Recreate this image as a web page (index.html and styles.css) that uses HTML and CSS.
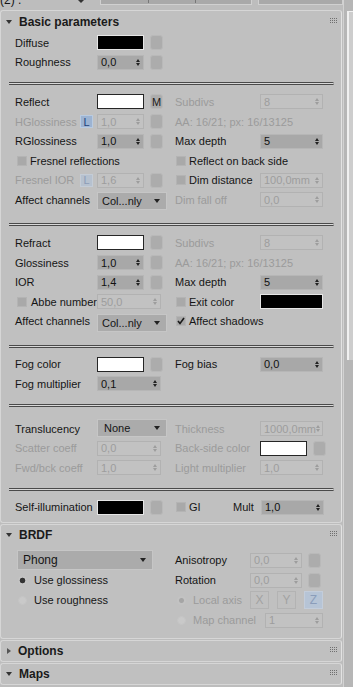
FILE: index.html
```html
<!DOCTYPE html>
<html lang="en">
<head>
  <meta charset="UTF-8">
  <meta name="viewport" content="width=device-width, initial-scale=1.0">
  <title>Material parameters</title>
  <link rel="stylesheet" href="styles.css">
</head>
<body>

  <div class="main">
    <!-- material name strip (cut off at the top) -->
    <div class="topbar">
      <span class="mtl-name">(2) .</span>
      <span class="pick"></span>
      <div class="top-field wide"><i></i><i></i></div>
      <div class="top-field"></div>
    </div>

    <!-- Basic parameters -->
    <div class="rollout">
      <div class="roll-head">
        <span class="tri"></span><span class="roll-title">Basic parameters</span>
        <svg class="grip" width="8" height="6" viewBox="0 0 8 6"><path d="M0 0h1v1H0zM2 0h1v1H2zM4 0h1v1H4zM6 0h1v1H6zM0 2h1v1H0zM2 2h1v1H2zM4 2h1v1H4zM6 2h1v1H6zM0 4h1v1H0zM2 4h1v1H2zM4 4h1v1H4zM6 4h1v1H6z" fill="#6f6f6f"/></svg>
      </div>

      <div class="sect first">
        <div class="row">
          <div class="half"><span class="lbl">Diffuse</span><span class="swatch dark"></span><span class="mapbtn"></span></div>
          <div class="half r"></div>
        </div>
        <div class="row">
          <div class="half"><span class="lbl">Roughness</span><span class="spin"><span>0,0</span><i class="arr"></i></span><span class="mapbtn"></span></div>
          <div class="half r"></div>
        </div>
      </div>
      <div class="sep"></div>

      <div class="sect">
        <div class="row">
          <div class="half"><span class="lbl">Reflect</span><span class="swatch light"></span><span class="mapbtn m">M</span></div>
          <div class="half r"><span class="lbl off">Subdivs</span><span class="spin wr off"><span>8</span><i class="arr"></i></span></div>
        </div>
        <div class="row">
          <div class="half"><span class="lbl"><span class="off">HGlossiness</span><span class="lock">L</span></span><span class="spin off"><span>1,0</span><i class="arr"></i></span><span class="mapbtn"></span></div>
          <div class="half r"><span class="off">AA: 16/21; px: 16/13125</span></div>
        </div>
        <div class="row">
          <div class="half"><span class="lbl">RGlossiness</span><span class="spin"><span>1,0</span><i class="arr"></i></span><span class="mapbtn"></span></div>
          <div class="half r"><span class="lbl">Max depth</span><span class="spin wr"><span>5</span><i class="arr"></i></span></div>
        </div>
        <div class="row">
          <div class="half"><span class="chk"></span><span>Fresnel reflections</span></div>
          <div class="half r"><span class="chk"></span><span>Reflect on back side</span></div>
        </div>
        <div class="row">
          <div class="half"><span class="lbl"><span class="off">Fresnel IOR</span><span class="lock off">L</span></span><span class="spin off"><span>1,6</span><i class="arr"></i></span><span class="mapbtn"></span></div>
          <div class="half r"><span class="lbl"><span class="chk"></span><span>Dim distance</span></span><span class="spin wr off"><span>100,0mm</span><i class="arr"></i></span></div>
        </div>
        <div class="row tall">
          <div class="half"><span class="lbl">Affect channels</span><span class="drop"><span>Col...nly</span><i class="down"></i></span></div>
          <div class="half r"><span class="lbl off">Dim fall off</span><span class="spin wr off"><span>0,0</span><i class="arr"></i></span></div>
        </div>
      </div>
      <div class="sep"></div>

      <div class="sect">
        <div class="row">
          <div class="half"><span class="lbl">Refract</span><span class="swatch light"></span><span class="mapbtn"></span></div>
          <div class="half r"><span class="lbl off">Subdivs</span><span class="spin wr off"><span>8</span><i class="arr"></i></span></div>
        </div>
        <div class="row">
          <div class="half"><span class="lbl">Glossiness</span><span class="spin"><span>1,0</span><i class="arr"></i></span><span class="mapbtn"></span></div>
          <div class="half r"><span class="off">AA: 16/21; px: 16/13125</span></div>
        </div>
        <div class="row">
          <div class="half"><span class="lbl">IOR</span><span class="spin"><span>1,4</span><i class="arr"></i></span><span class="mapbtn"></span></div>
          <div class="half r"><span class="lbl">Max depth</span><span class="spin wr"><span>5</span><i class="arr"></i></span></div>
        </div>
        <div class="row">
          <div class="half"><span class="lbl"><span class="chk"></span><span>Abbe number</span></span><span class="spin wide off"><span>50,0</span><i class="arr"></i></span></div>
          <div class="half r"><span class="lbl"><span class="chk"></span><span>Exit color</span></span><span class="swatch dark wr"></span></div>
        </div>
        <div class="row tall">
          <div class="half"><span class="lbl">Affect channels</span><span class="drop"><span>Col...nly</span><i class="down"></i></span></div>
          <div class="half r"><span class="chk on"><svg width="8" height="8" viewBox="0 0 8 8"><path d="M1 4l2 2.5L7 1" fill="none" stroke="#1a1a1a" stroke-width="1.6"/></svg></span><span>Affect shadows</span></div>
        </div>
      </div>
      <div class="sep"></div>

      <div class="sect">
        <div class="row">
          <div class="half"><span class="lbl">Fog color</span><span class="swatch light"></span><span class="mapbtn"></span></div>
          <div class="half r"><span class="lbl">Fog bias</span><span class="spin wr"><span>0,0</span><i class="arr"></i></span></div>
        </div>
        <div class="row">
          <div class="half"><span class="lbl">Fog multiplier</span><span class="spin wide"><span>0,1</span><i class="arr"></i></span></div>
          <div class="half r"></div>
        </div>
      </div>
      <div class="sep"></div>

      <div class="sect trans">
        <div class="row">
          <div class="half"><span class="lbl">Translucency</span><span class="drop short"><span>None</span><i class="down"></i></span></div>
          <div class="half r"><span class="lbl off">Thickness</span><span class="spin wr off"><span>1000,0mm</span><i class="arr"></i></span></div>
        </div>
        <div class="row">
          <div class="half"><span class="lbl off">Scatter coeff</span><span class="spin wide off"><span>0,0</span><i class="arr"></i></span></div>
          <div class="half r"><span class="lbl off">Back-side color</span><span class="swatch light"></span><span class="mapbtn"></span></div>
        </div>
        <div class="row">
          <div class="half"><span class="lbl off">Fwd/bck coeff</span><span class="spin wide off"><span>1,0</span><i class="arr"></i></span></div>
          <div class="half r"><span class="lbl off">Light multiplier</span><span class="spin wr off"><span>1,0</span><i class="arr"></i></span></div>
        </div>
      </div>
      <div class="sep"></div>

      <div class="sect last">
        <div class="row">
          <div class="half"><span class="lbl">Self-illumination</span><span class="swatch dark"></span><span class="mapbtn"></span></div>
          <div class="half r"><span class="chk"></span><span class="gi">GI</span><span class="mult">Mult</span><span class="spin wr"><span>1,0</span><i class="arr"></i></span></div>
        </div>
      </div>
    </div>

    <!-- BRDF -->
    <div class="rollout">
      <div class="roll-head small">
        <span class="tri"></span><span class="roll-title">BRDF</span>
        <svg class="grip" width="8" height="6" viewBox="0 0 8 6"><path d="M0 0h1v1H0zM2 0h1v1H2zM4 0h1v1H4zM6 0h1v1H6zM0 2h1v1H0zM2 2h1v1H2zM4 2h1v1H4zM6 2h1v1H6zM0 4h1v1H0zM2 4h1v1H2zM4 4h1v1H4zM6 4h1v1H6z" fill="#6f6f6f"/></svg>
      </div>
      <div class="brdf">
        <div class="row b">
          <div class="half"><span class="drop phong"><span>Phong</span><i class="down"></i></span></div>
          <div class="half r"><span class="lbl s">Anisotropy</span><span class="spin an off"><span>0,0</span><i class="arr"></i></span><span class="mapbtn"></span></div>
        </div>
        <div class="row b">
          <div class="half"><span class="radio on"></span><span>Use glossiness</span></div>
          <div class="half r"><span class="lbl s">Rotation</span><span class="spin an off"><span>0,0</span><i class="arr"></i></span><span class="mapbtn"></span></div>
        </div>
        <div class="row b">
          <div class="half"><span class="radio"></span><span>Use roughness</span></div>
          <div class="half r"><span class="lbl s"><span class="radio on off"></span><span class="off">Local axis</span></span><span class="axis">X</span><span class="axis">Y</span><span class="axis sel">Z</span></div>
        </div>
        <div class="row b">
          <div class="half"></div>
          <div class="half r"><span class="lbl mc"><span class="radio off"></span><span class="off">Map channel</span></span><span class="spin ch off"><span>1</span><i class="arr"></i></span></div>
        </div>
      </div>
    </div>

    <!-- Options -->
    <div class="rollout">
      <div class="roll-head small">
        <span class="tri closed"></span><span class="roll-title">Options</span>
        <svg class="grip" width="8" height="6" viewBox="0 0 8 6"><path d="M0 0h1v1H0zM2 0h1v1H2zM4 0h1v1H4zM6 0h1v1H6zM0 2h1v1H0zM2 2h1v1H2zM4 2h1v1H4zM6 2h1v1H6zM0 4h1v1H0zM2 4h1v1H2zM4 4h1v1H4zM6 4h1v1H6z" fill="#6f6f6f"/></svg>
      </div>
    </div>

    <!-- Maps -->
    <div class="rollout">
      <div class="roll-head small">
        <span class="tri"></span><span class="roll-title">Maps</span>
        <svg class="grip" width="8" height="6" viewBox="0 0 8 6"><path d="M0 0h1v1H0zM2 0h1v1H2zM4 0h1v1H4zM6 0h1v1H6zM0 2h1v1H0zM2 2h1v1H2zM4 2h1v1H4zM6 2h1v1H6zM0 4h1v1H0zM2 4h1v1H2zM4 4h1v1H4zM6 4h1v1H6z" fill="#6f6f6f"/></svg>
      </div>
    </div>
  </div>

  <div class="scroll">
    <div class="thumb"></div>
  </div>

</body>
</html>
```

FILE: styles.css
```css
* {
  box-sizing: border-box;
}
body {
  margin: 0;
  height: 687px;
  display: flex;
  overflow: hidden;
  background-color: #bdbdbd;
  font-family: "Liberation Sans", Arial, sans-serif;
  font-size: 11px;
  color: #151515;
}
.main {
  width: 343px;
  flex: none;
}

/* top strip */
.topbar {
  height: 10px;
  display: flex;
  align-items: flex-start;
  overflow: hidden;
}
.mtl-name {
  margin-top: -7px;
  line-height: 14px;
  width: 78px;
  font-size: 12px;
}
.pick {
  width: 6px;
  height: 3px;
  border-left: 3px solid transparent;
  border-right: 3px solid transparent;
  border-top: 3px solid #333;
}
.top-field {
  position: relative;
  height: 5px;
  width: 85px;
  margin-left: auto;
  background: #a9a9a9;
  border: 1px solid #d0d0d0;
  border-top: none;
}
.top-field.wide {
  width: 152px;
  margin-left: 16px;
  margin-right: 3px;
}
.top-field i {
  width: 1px;
  height: 3px;
  background: #777;
  position: absolute;
  top: 0;
  left: 47px;
}
.top-field i + i {
  left: 94px;
}

/* rollouts */
.rollout {
  width: 342px;
  background: #c0c0c0;
  border: 1px solid #d6d6d6;
  border-right-color: #e2e2e2;
  border-radius: 3px;
  margin-bottom: 1px;
}
.roll-head {
  height: 21px;
  display: flex;
  align-items: center;
}
.roll-head.small {
  height: 20px;
}
.tri {
  width: 0;
  height: 0;
  margin: 0 7px 0 5px;
  border-left: 3px solid transparent;
  border-right: 3px solid transparent;
  border-top: 4px solid #333;
}
.tri.closed {
  margin: 0 7px 0 6px;
  border-top: 3px solid transparent;
  border-bottom: 3px solid transparent;
  border-left: 4px solid #555;
  border-right: none;
}
.roll-title {
  font-weight: bold;
  font-size: 12px;
  color: #1a1a1a;
}
.grip {
  margin-left: auto;
  margin-right: 3px;
  margin-top: -2px;
}

/* sections */
.sect {
  padding-left: 14px;
}
.sect.first {
  padding-top: 1px;
}
.sect.trans {
  padding-top: 5px;
}
.sect.last {
  padding-bottom: 5px;
}
.sep {
  margin: 10px 0 7px 8px;
  width: 325px;
  height: 3px;
  background: #d8d8d8;
  border-top: 1px solid #4a4a4a;
  border-bottom: 1px solid #4a4a4a;
  border-radius: 0 2px 2px 0;
}
.row {
  display: grid;
  grid-template-columns: 155px 155px;
  column-gap: 5px;
  height: 19.6px;
  align-items: center;
}
.row.tall {
  height: 23px;
  align-items: start;
}
.row.tall .half {
  height: 19.6px;
}
.half {
  display: flex;
  align-items: center;
  white-space: nowrap;
}
.lbl {
  width: 82px;
  flex: none;
  display: flex;
  align-items: center;
  justify-content: space-between;
}
.half.r .lbl {
  width: 85px;
  justify-content: flex-start;
}
.off {
  color: #9b9b9b;
}
.lock {
  width: 13px;
  height: 13px;
  margin-right: 4px;
  display: flex;
  align-items: center;
  justify-content: center;
  background: #9cb3d2;
  border: 1px solid #b9cbe1;
  color: #23427a;
  font-size: 11px;
}
.lock.off {
  background: #b6c1cf;
  border-color: #c4ccd6;
  color: #8c9cb6;
}

/* controls */
.swatch {
  width: 47px;
  height: 15px;
  flex: none;
}
.swatch.light {
  background: #fff;
  border: 1px solid #262626;
}
.swatch.dark {
  background: #000;
  border: 1px solid #e6e6e6;
}
.swatch.wr {
  width: 63px;
}
.mapbtn {
  width: 13px;
  height: 15px;
  margin-left: 6px;
  flex: none;
  background: #acacac;
  border: 1px solid #b9b9b9;
  border-radius: 3px;
}
.mapbtn.m {
  display: flex;
  align-items: center;
  justify-content: center;
  font-size: 11px;
  color: #1a1a1a;
}
.spin {
  width: 47px;
  height: 15px;
  flex: none;
  display: flex;
  align-items: center;
  justify-content: space-between;
  padding: 0 3px;
  background: #a8a8a8;
  border: 1px solid #b6b6b6;
  font-size: 11px;
  color: #111;
}
.spin.wide {
  width: 64px;
}
.spin.wr {
  width: 63px;
}
.spin.an {
  width: 52px;
}
.spin.ch {
  width: 58px;
}
.spin.off {
  background: #c2c2c2;
  border-color: #b2b2b2;
  color: #9d9d9d;
}
.arr {
  display: flex;
  flex-direction: column;
  gap: 1px;
}
.arr::before, .arr::after {
  content: "";
  border-left: 2px solid transparent;
  border-right: 2px solid transparent;
}
.arr::before {
  border-bottom: 3px solid #222;
}
.arr::after {
  border-top: 3px solid #222;
}
.spin.off .arr::before {
  border-bottom-color: #9d9d9d;
}
.spin.off .arr::after {
  border-top-color: #9d9d9d;
}
.drop {
  width: 70px;
  height: 18px;
  margin-top: 3px;
  flex: none;
  display: flex;
  align-items: center;
  justify-content: space-between;
  padding: 0 6px 0 4px;
  background: #ababab;
  border: 1px solid #c6c6c6;
}
.drop.short {
  margin-top: -2px;
  padding-left: 6px;
}
.drop.phong {
  width: 136px;
  height: 20px;
  margin: 0 0 0 2px;
  padding-left: 5px;
  font-size: 12px;
}
.down {
  border-left: 3px solid transparent;
  border-right: 3px solid transparent;
  border-top: 4px solid #222;
}
.chk {
  width: 10px;
  height: 10px;
  margin: 0 3px 0 2px;
  flex: none;
  display: flex;
  align-items: center;
  justify-content: center;
  background: #a9a9a9;
  border: 1px solid #b4b4b4;
}
.half.r .chk {
  margin-left: 1px;
}
.gi {
  width: 44px;
}
.mult {
  width: 28px;
}

/* BRDF */
.brdf {
  padding: 5px 0 8px 14px;
}
.row.b {
  height: 20px;
}
.half.r .lbl.s {
  width: 75px;
}
.half.r .lbl.mc {
  width: 90px;
}
.radio {
  width: 9px;
  height: 9px;
  margin: 0 7px 0 3px;
  flex: none;
  border-radius: 50%;
  background: #c9c9c9;
  border: 1px solid #c4c4c4;
}
.radio.on {
  background: radial-gradient(circle, #333 2.5px, #c9c9c9 3.2px);
}
.radio.on.off {
  background: radial-gradient(circle, #a5a5a5 2px, #c2c2c2 3px);
}
.half.r .radio {
  margin-left: 2px;
}
.axis {
  width: 19px;
  height: 18px;
  margin-right: 8px;
  flex: none;
  display: flex;
  align-items: center;
  justify-content: center;
  border: 1px solid #b3b3b3;
  color: #a2a2a2;
  font-size: 12px;
}
.axis.sel {
  margin-right: 0;
  background: #b6c4d6;
  border-color: #c3cddb;
  color: #8b9dba;
}

/* scrollbar */
.scroll {
  flex: 1;
  padding-top: 11px;
  background: #b6b6b6;
  border-left: 1px solid #d2d2d2;
}
.thumb {
  height: 349px;
  margin-left: 3px;
  background: #cdcdcd;
  border-left: 2px solid #f0f0f0;
  border-top: 1px solid #f0f0f0;
}
```
